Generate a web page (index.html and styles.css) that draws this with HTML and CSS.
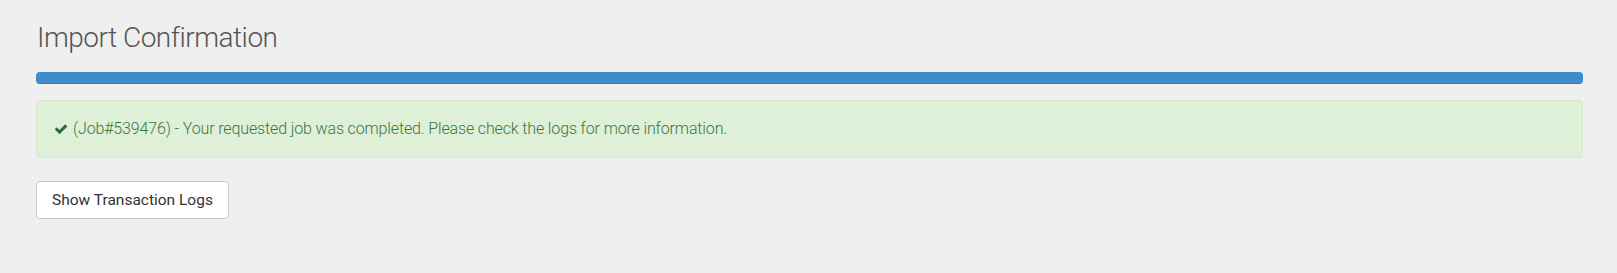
FILE: index.html
```html
<!DOCTYPE html>
<html lang="en">
<head>
    <meta charset="UTF-8">
    <title>Import Confirmation</title>
    <link rel="stylesheet" href="styles.css">
</head>
<body>
    <div class="container">
        <h2 class="page-title">Import Confirmation</h2>

        <div class="progress">
            <div class="progress-bar" style="width: 100%;"></div>
        </div>

        <div class="alert alert-success">
            <svg class="check-icon" viewBox="0 0 1792 1792" width="14" height="14">
                <path d="M1671 566q0 40-28 68l-724 724-136 136q-28 28-68 28t-68-28l-136-136-362-362q-28-28-28-68t28-68l136-136q28-28 68-28t68 28l294 295 656-657q28-28 68-28t68 28l136 136q28 28 28 68z"/>
            </svg>
            (Job#539476) - Your requested job was completed. Please check the logs for more information.
        </div>

        <button class="btn">Show Transaction Logs</button>
    </div>
</body>
</html>
```

FILE: styles.css
```css
* {
    margin: 0;
    padding: 0;
    box-sizing: border-box;
}

body {
    background-color: #efefef;
    font-family: Roboto, "Liberation Sans", sans-serif;
    color: #333;
}

.container {
    padding: 22px 34px 0 36px;
}

.page-title {
    font-size: 28px;
    font-weight: 300;
    letter-spacing: -0.5px;
    line-height: 32px;
    color: #555;
    margin-left: 1px;
}

.progress {
    height: 12px;
    margin-top: 18px;
    background-color: #e6e6e6;
    border-radius: 4px;
    overflow: hidden;
}

.progress-bar {
    height: 100%;
    background-color: #428bca;
    box-shadow: inset 0 -1px 0 rgba(0, 0, 0, 0.15);
}

.alert {
    margin-top: 16px;
    padding: 18px 18px 18px 17px;
    border: 1px solid #d6e9c6;
    border-radius: 4px;
    font-size: 16px;
    font-weight: 300;
    letter-spacing: -0.14px;
    line-height: 20px;
    display: flex;
    align-items: center;
}

.alert-success {
    background-color: #dff0d8;
    color: #3c763d;
}

.check-icon {
    fill: #2f6b34;
    margin-right: 5px;
    flex-shrink: 0;
}

.btn {
    margin-top: 23px;
    height: 38px;
    padding: 0 15px;
    font-family: Roboto, "Liberation Sans", sans-serif;
    font-size: 15.5px;
    color: #333;
    background-color: #fff;
    border: 1px solid #ccc;
    border-radius: 4px;
    cursor: pointer;
}
```
